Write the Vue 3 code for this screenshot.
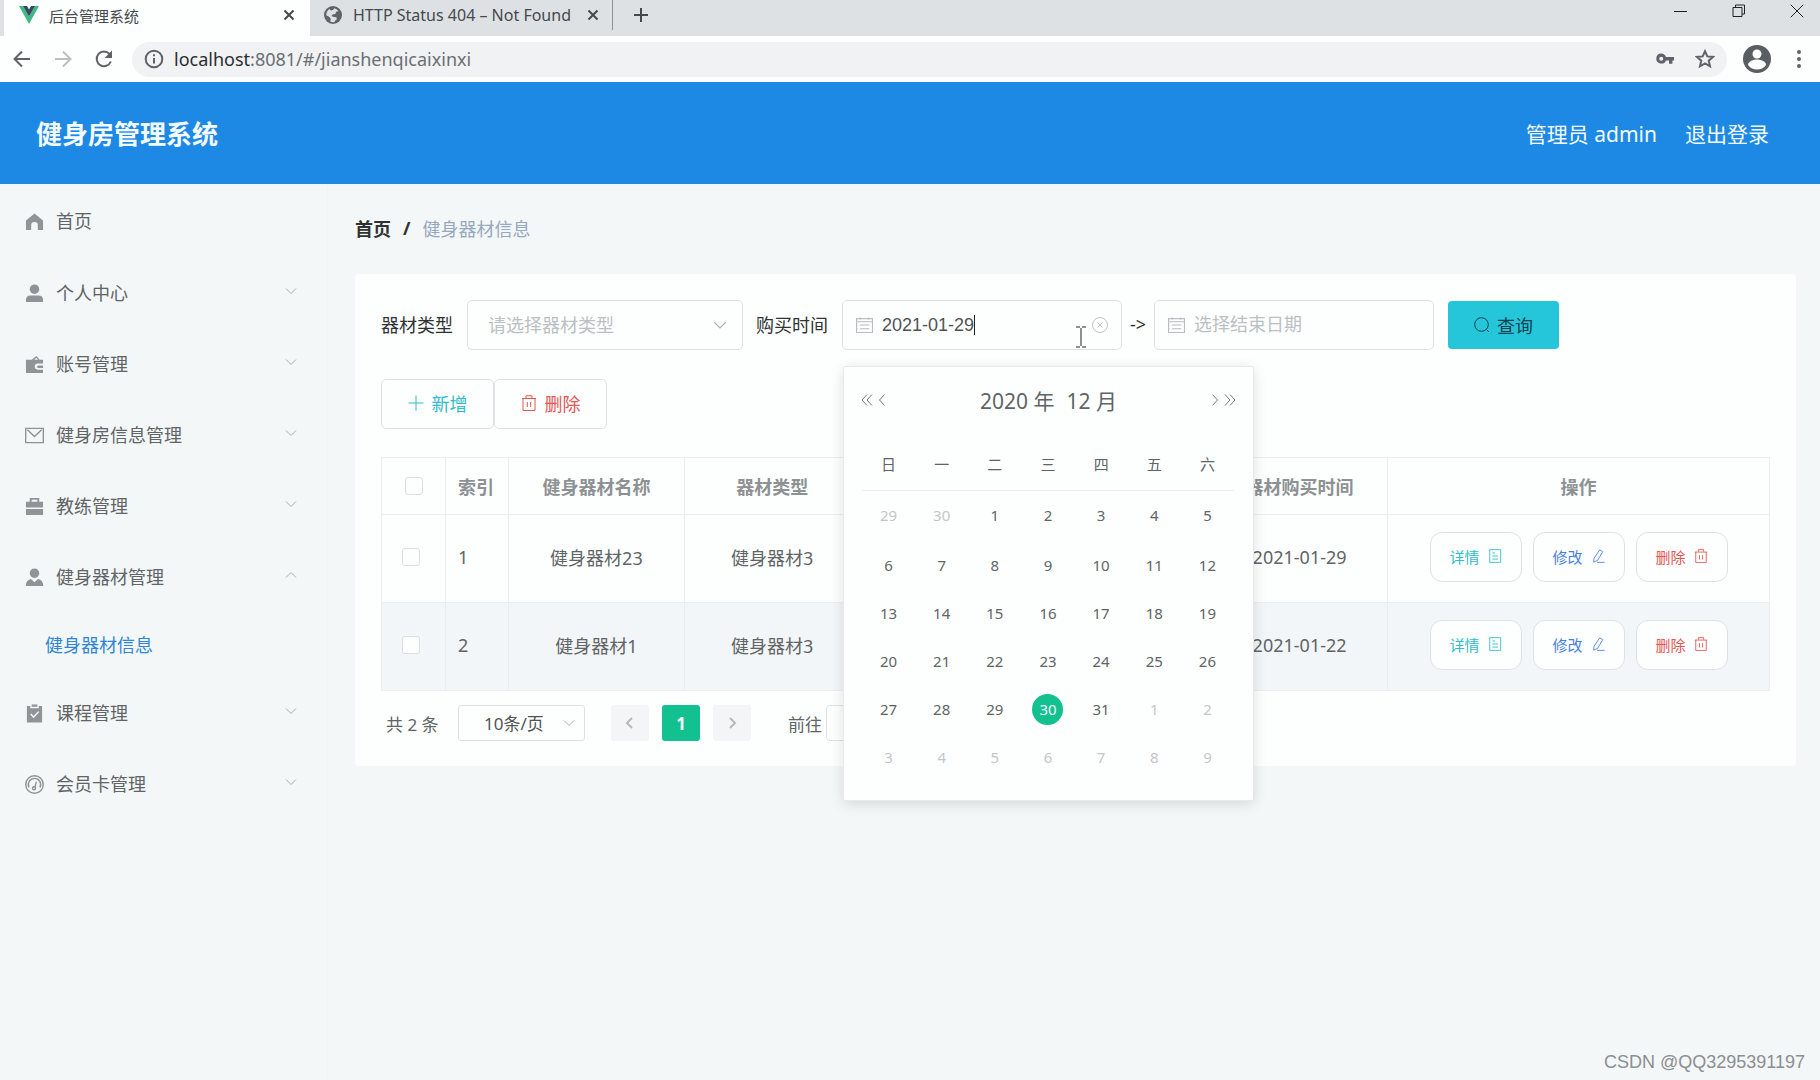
<script setup>
import { ref } from 'vue'

const menu = [
  { icon: 'home', label: '首页', home: true },
  { icon: 'user', label: '个人中心' },
  { icon: 'wallet', label: '账号管理' },
  { icon: 'mail', label: '健身房信息管理' },
  { icon: 'case', label: '教练管理' },
  { icon: 'coach', label: '健身器材管理', open: true, children: ['健身器材信息'] },
  { icon: 'clip', label: '课程管理' },
  { icon: 'gauge', label: '会员卡管理' },
]
const rows = [
  { id: 1, name: '健身器材23', type: '健身器材3', date: '2021-01-29' },
  { id: 2, name: '健身器材1', type: '健身器材3', date: '2021-01-22' },
]
const weekdays = ['日', '一', '二', '三', '四', '五', '六']
const weeks = Array.from({ length: 6 }, (_, w) =>
  Array.from({ length: 7 }, (_, d) => {
    const n = w * 7 + d - 1
    if (n < 1) return { day: n + 30, other: true }
    if (n > 31) return { day: n - 31, other: true }
    return { day: n, today: n === 30 }
  })
)
const start = ref('2021-01-29')
const end = ref('')
</script>

<template>
  <div class="window">
    <header class="browser">
      <div class="tabs">
        <div class="tab active">
          <svg class="vue" viewBox="0 0 20 18"><path fill="#41b883" d="M0 0h4l6 10.500L16 0h4L10 18z" /><path fill="#35495e" d="M4 0h4l2 3.500L12 0h4l-6 10.500z" /></svg>
          <span>后台管理系统</span>
          <button class="plain close" aria-label="关闭标签页"><svg viewBox="0 0 12 12"><path d="M1.500 1.500l9 9M10.500 1.500l-9 9" /></svg></button>
        </div>
        <div class="tab second">
          <svg class="globe" viewBox="0 0 18 18"><circle cx="9" cy="9" r="9" fill="#5f6368" /><path fill="#dee1e4" d="M10 2.200c1.800.3 3.500 1.500 4.400 3.100l-2.200.4-1 2.300-2.600.6-1.200 1.500 2.500.9 2.500.2.500 2-1.700 1.300-.7 1.500c-1.500.4-3 .1-4.300-.6l.6-2.200-1.300-2.300-3.300-1.600C2.200 6 3.600 4 5.500 2.900L6.800 4.400l2.400-.5z" /></svg>
          <span>HTTP Status 404 – Not Found</span>
          <button class="plain close" aria-label="关闭标签页"><svg viewBox="0 0 12 12"><path d="M1.500 1.500l9 9M10.500 1.500l-9 9" /></svg></button>
        </div>
        <button class="plain add" aria-label="新标签页"><svg viewBox="0 0 16 16"><path d="M8 1v14M1 8h14" /></svg></button>
        <div class="wincontrols">
          <button class="plain" aria-label="最小化"><svg viewBox="0 0 14 14"><path d="M0 7.500h13" /></svg></button>
          <button class="plain" aria-label="还原"><svg viewBox="0 0 14 14"><path d="M1 3.500h9v9H1zM3.500 3.500v-2.500h9v9H10" /></svg></button>
          <button class="plain" aria-label="关闭"><svg viewBox="0 0 14 14"><path d="M.7.7l12.600 12.600M13.300.7L.7 13.300" /></svg></button>
        </div>
      </div>
      <div class="toolbar">
        <button class="plain nav" aria-label="后退"><svg viewBox="0 0 20 20"><path d="M18 10H3M10 2.500L2.500 10l7.500 7.500" /></svg></button>
        <button class="plain nav off" aria-label="前进"><svg viewBox="0 0 20 20"><path d="M2 10h15M10 2.500l7.500 7.500-7.500 7.500" /></svg></button>
        <button class="plain nav" aria-label="刷新"><svg viewBox="0 0 20 20"><path d="M15.500 5A7.300 7.300 0 1 0 16.800 12.500" /><path fill="#5f6368" stroke="none" d="M18 1.500v7.500h-7.500z" /></svg></button>
        <div class="omnibox">
          <svg class="info" viewBox="0 0 20 20"><circle cx="10" cy="10" r="8.300" /><path d="M10 9v5.500M10 5.300v2" /></svg>
          <span class="url"><b>localhost</b>:8081/#/jianshenqicaixinxi</span>
          <svg class="key" viewBox="0 0 20 12"><path fill="#5f6368" fill-rule="evenodd" d="M5.500.5a5.300 5.300 0 0 1 5 3.700H19v3.600h-1.700v3.400h-3.600V7.800h-3.200A5.300 5.300 0 1 1 5.500.5zm0 3.400a2.100 2.100 0 1 0 0 4.200 2.100 2.100 0 0 0 0-4.200z" /></svg>
          <svg class="star" viewBox="0 0 20 20"><path d="M10 2.200l2.300 5.200 5.700.5-4.300 3.800 1.300 5.600-5-3-5 3 1.300-5.600L2 7.900l5.700-.5z" /></svg>
        </div>
        <svg class="avatar" viewBox="0 0 28 28"><circle cx="14" cy="14" r="14" fill="#5a5e63" /><circle cx="14" cy="9" r="4.500" fill="#fdfffe" /><path fill="#fdfffe" d="M5 20c0-4 6-5.500 9-5.500s9 1.500 9 5.500c-2 3-5.500 4.600-9 4.600S7 23 5 20z" /></svg>
        <button class="plain dots" aria-label="菜单"><svg viewBox="0 0 4 18"><circle cx="2" cy="2" r="2" /><circle cx="2" cy="9" r="2" /><circle cx="2" cy="16" r="2" /></svg></button>
      </div>
    </header>

    <div class="banner">
      <h1>健身房管理系统</h1>
      <span class="who">管理员 admin</span>
      <a href="#logout">退出登录</a>
    </div>

    <div class="body">
      <nav class="sidebar">
        <template v-for="m in menu" :key="m.label">
          <a class="item" :class="{ home: m.home }" href="#">
            <svg class="mi" viewBox="0 0 20 20">
              <path v-if="m.icon === 'home'" d="M10 1.500L19 9v10h-5.500v-5a3.500 3.500 0 0 0-7 0v5H1V9z" />
              <g v-else-if="m.icon === 'user'"><circle cx="10" cy="5.500" r="5" /><path d="M1 19v-2.500c0-3 2-4.500 4.500-4.500h9c2.500 0 4.500 1.500 4.500 4.500V19z" /></g>
              <path v-else-if="m.icon === 'wallet'" fill-rule="evenodd" d="M1 5h6l5-4 3.500 4H19v4h-5.500a3.200 3.200 0 0 0 0 6.400H19V19H1zM9.800 5h3.800L12 3zM14 11h5v2.600h-5a1.300 1.300 0 0 1 0-2.600z" />
              <g v-else-if="m.icon === 'mail'" class="line"><path d="M.7 2.500h18.600v15H.7zM2.500 4l7.500 7L17.500 4" /></g>
              <path v-else-if="m.icon === 'case'" fill-rule="evenodd" d="M5 5V1h10v4h4v6H1V5zm2 0h6V3H7zM1 12.500h18V19H1z" />
              <g v-else-if="m.icon === 'coach'"><circle cx="10" cy="5.500" r="5" /><path d="M.8 19c0-4 2-6.500 5.500-7.300L10 15l3.700-3.300c3.500.8 5.500 3.300 5.500 7.300z" /></g>
              <path v-else-if="m.icon === 'clip'" fill-rule="evenodd" d="M2 2h3.500v2.500h9V2H18v17.500H2zM7 .5h6V3H7zM5.500 11l3.500 4 6-6.500-1.200-1L9 12.700 6.700 10z" />
              <g v-else class="line"><circle cx="10" cy="10" r="9.200" /><path d="M4.200 13a6.500 6.500 0 1 1 11.600 0" /><circle cx="9.500" cy="14" r="1.600" /><path d="M10.300 13l1.700-6" /></g>
            </svg>
            <span>{{ m.label }}</span>
            <svg v-if="!m.home" class="chev" :class="{ up: m.open }" viewBox="0 0 12 12"><path d="M1 3.500l5 5 5-5" /></svg>
          </a>
          <a v-for="c in m.children" :key="c" class="sub" href="#">{{ c }}</a>
        </template>
      </nav>

      <main>
        <div class="crumbs"><b>首页</b><b class="slash">/</b><span>健身器材信息</span></div>
        <section class="card">
          <form class="filters" @submit.prevent>
            <label for="kind">器材类型</label>
            <div class="field kind">
              <select id="kind"><option>请选择器材类型</option></select>
              <svg class="chev" viewBox="0 0 12 12"><path d="M1 3.500l5 5 5-5" /></svg>
            </div>
            <label for="from">购买时间</label>
            <div class="field date first">
              <svg class="cal" viewBox="0 0 16 16"><path d="M.5 1.500h15v13H.5zM.5 4.500h15M3.500 7.500h9M3.500 11h9M.5 7.500h1M.5 11h1M4 .5v2M12 .5v2" /></svg>
              <input id="from" v-model="start" type="text" />
              <i class="caret"></i>
              <svg class="beam" viewBox="0 0 10 22"><path d="M0 1h4M6 1h4M5 2v18M0 21h4M6 21h4" /></svg>
              <svg class="clear" viewBox="0 0 18 18"><circle cx="9" cy="9" r="7.500" /><path d="M6.500 6.500l5 5M11.500 6.500l-5 5" /></svg>
              <div class="picker">
                <div class="phead">
                  <button type="button" class="plain" aria-label="前一年"><svg viewBox="0 0 12 12"><path d="M6 .5L1 6l5 5.500M11 .5L6 6l5 5.500" /></svg></button>
                  <button type="button" class="plain" aria-label="上个月"><svg viewBox="0 0 12 12"><path d="M8.500.5L3.500 6l5 5.500" /></svg></button>
                  <div class="ptitle"><span>2020 年</span><span>12 月</span></div>
                  <button type="button" class="plain" aria-label="下个月"><svg viewBox="0 0 12 12"><path d="M3.500.5L8.500 6l-5 5.500" /></svg></button>
                  <button type="button" class="plain" aria-label="后一年"><svg viewBox="0 0 12 12"><path d="M1 .5L6 6l-5 5.500M6 .5L11 6l-5 5.500" /></svg></button>
                </div>
                <table class="days">
                  <thead><tr><th v-for="w in weekdays" :key="w">{{ w }}</th></tr></thead>
                  <tbody>
                    <tr v-for="(w, i) in weeks" :key="i">
                      <td v-for="(d, j) in w" :key="j" :class="{ other: d.other, today: d.today }"><span>{{ d.day }}</span></td>
                    </tr>
                  </tbody>
                </table>
              </div>
            </div>
            <label class="arrow" for="to">-&gt;</label>
            <div class="field date">
              <svg class="cal" viewBox="0 0 16 16"><path d="M.5 1.500h15v13H.5zM.5 4.500h15M3.500 7.500h9M3.500 11h9M.5 7.500h1M.5 11h1M4 .5v2M12 .5v2" /></svg>
              <input id="to" v-model="end" type="text" placeholder="选择结束日期" />
            </div>
            <button class="query"><svg viewBox="0 0 16 16"><circle cx="7.500" cy="7.500" r="6.800" /><path d="M12.500 12.500L15 15" /></svg>查询</button>
          </form>

          <div class="actions">
            <button class="teal"><svg viewBox="0 0 16 16"><path d="M8 .5v15M.5 8h15" /></svg>新增</button>
            <button class="red"><svg viewBox="0 0 16 16"><path d="M1 3.500h14M5 3V.7h6V3M2 3.500v12h12v-12M6.300 7v5M9.700 7v5" /></svg>删除</button>
          </div>

          <table class="grid">
            <colgroup><col class="c1" /><col class="c2" /><col /><col /><col /><col /><col /><col class="ops" /></colgroup>
            <thead>
              <tr>
                <th class="check"><input type="checkbox" aria-label="全选" /></th>
                <th class="idx">索引</th><th>健身器材名称</th><th>器材类型</th><th></th><th></th><th>器材购买时间</th><th>操作</th>
              </tr>
            </thead>
            <tbody>
              <tr v-for="r in rows" :key="r.id">
                <td class="check"><input type="checkbox" :aria-label="r.name" /></td>
                <td class="idx">{{ r.id }}</td><td>{{ r.name }}</td><td>{{ r.type }}</td><td></td><td></td><td>{{ r.date }}</td>
                <td>
                  <div class="rowops">
                    <button class="teal">详情<svg viewBox="0 0 16 16"><path d="M2 .7h12.500v14.600H2zM5 4.500h3M5 8h6.500M5 11.500h6.500" /></svg></button>
                    <button class="blue">修改<svg viewBox="0 0 16 16"><path d="M10 1l3.500 2-6 10-4.500 2 .5-4.500zM7 15.300h8.500" /></svg></button>
                    <button class="red">删除<svg viewBox="0 0 16 16"><path d="M1 3.500h14M5 3V.7h6V3M2 3.500v12h12v-12M6.300 7v5M9.700 7v5" /></svg></button>
                  </div>
                </td>
              </tr>
            </tbody>
          </table>

          <div class="pager">
            <span class="total">共 2 条</span>
            <div class="field size">
              <select aria-label="每页条数"><option>10条/页</option></select>
              <svg class="chev" viewBox="0 0 12 12"><path d="M1 3.500l5 5 5-5" /></svg>
            </div>
            <button class="pg" aria-label="上一页"><svg viewBox="0 0 12 12"><path d="M8 1L3 6l5 5" /></svg></button>
            <button class="pg on">1</button>
            <button class="pg" aria-label="下一页"><svg viewBox="0 0 12 12"><path d="M4 1l5 5-5 5" /></svg></button>
            <label for="jump">前往</label>
            <input id="jump" class="jump" type="text" />
          </div>
        </section>
      </main>
    </div>
    <div class="mark">CSDN @QQ3295391197</div>
  </div>
</template>

<style>
body {
  background: #f3f7f8;
}
</style>

<style scoped>
* {
  box-sizing: border-box;
}
.window {
  position: relative;
  display: flex;
  flex-direction: column;
  min-height: 100vh;
  font-family: "Noto Sans", "Noto Sans CJK SC", sans-serif;
  font-size: 18px;
  color: #606466;
}
button,
input,
select {
  font: inherit;
}
svg {
  flex: none;
  fill: none;
  stroke: currentColor;
}
a {
  text-decoration: none;
  color: inherit;
}
.plain {
  display: flex;
  align-items: center;
  justify-content: center;
  padding: 0;
  border: 0;
  background: none;
  color: inherit;
}

/* browser frame */
.tabs {
  display: flex;
  align-items: flex-start;
  height: 36px;
  padding-left: 4px;
  background: #dee1e4;
  color: #45494d;
  font-size: 15px;
}
.tab {
  display: flex;
  align-items: center;
  height: 36px;
  padding-bottom: 6px;
}
.tab span {
  flex: 1;
  white-space: nowrap;
}
.tab.active {
  width: 306px;
  padding-left: 15px;
  padding-right: 15px;
  gap: 10px;
  background: #fdfffe;
}
.tab.second {
  width: 303px;
  height: 30px;
  padding: 0 13px 0 14px;
  gap: 11px;
  border-right: 1px solid #8d9195;
  font-size: 16px;
}
.vue {
  width: 20px;
  height: 18px;
  stroke: none;
}
.globe {
  width: 18px;
  height: 18px;
  stroke: none;
}
.close {
  width: 12px;
}
.close svg {
  width: 12px;
  stroke-width: 2;
}
.add {
  width: 56px;
  height: 30px;
}
.add svg {
  width: 16px;
  stroke-width: 2;
}
.wincontrols {
  display: flex;
  gap: 44px;
  margin-left: auto;
  padding: 4px 16px 0 0;
  color: #202124;
}
.wincontrols svg {
  width: 14px;
  height: 14px;
}
.toolbar {
  display: flex;
  align-items: center;
  height: 46px;
  padding: 0 19px 0 12px;
  background: #fdfffe;
  color: #5f6368;
}
.nav {
  width: 20px;
  margin-right: 21px;
}
.nav.off {
  color: #bcbfc1;
}
.nav svg {
  width: 20px;
  height: 20px;
  stroke-width: 2;
}
.omnibox {
  display: flex;
  flex: 1;
  align-items: center;
  height: 35px;
  margin-left: -3px;
  padding: 0 12px;
  border-radius: 18px;
  background: #f0f2f3;
}
.info {
  width: 20px;
  margin-right: 10px;
  stroke-width: 2;
}
.url {
  flex: 1;
  color: #6b6f73;
}
.url b {
  font-weight: 400;
  color: #2b2e31;
}
.key {
  width: 19px;
  margin-right: 20px;
  stroke: none;
}
.star {
  width: 20px;
  stroke-width: 2;
}
.avatar {
  width: 28px;
  margin: 0 26px 0 16px;
  stroke: none;
}
.dots {
  width: 4px;
}
.dots svg {
  width: 4px;
  height: 18px;
  fill: currentColor;
  stroke: none;
}

/* application header */
.banner {
  display: flex;
  align-items: center;
  height: 102px;
  padding: 0 51px 0 36px;
  background: #1e88e5;
  color: #f2fbff;
  font-size: 21px;
}
h1 {
  flex: 1;
  margin: 0;
  font-size: 26px;
  font-weight: 700;
}
.who {
  margin-right: 28px;
}

/* sidebar */
.body {
  display: flex;
  flex: 1;
}
.sidebar {
  flex: none;
  width: 328px;
  border-right: 1px solid #f0f4f5;
}
.item {
  display: flex;
  align-items: center;
  height: 71px;
  padding: 0 30px 0 25px;
}
.item.home {
  height: 73px;
}
.mi {
  width: 19px;
  height: 19px;
  margin: 2px 12px 0 0;
  fill: #8f9497;
  stroke: none;
}
.mi .line {
  fill: none;
  stroke: #8f9497;
  stroke-width: 1.500;
}
.item span {
  flex: 1;
  padding-bottom: 2px;
}
.chev {
  width: 12px;
  height: 12px;
  color: #a9adb0;
}
.item .chev {
  margin-bottom: 4px;
}
.chev.up {
  transform: rotate(180deg);
}
.sub {
  display: flex;
  align-items: center;
  height: 65px;
  padding: 0 0 2px 45px;
  color: #2f86d6;
}

/* content */
main {
  flex: 1;
  min-width: 0;
  padding: 0 24px 0 27px;
}
.crumbs {
  display: flex;
  align-items: center;
  height: 90px;
  padding-bottom: 2px;
  color: #97a8be;
}
.crumbs b {
  color: #303133;
}
.crumbs .slash {
  margin: 0 12px;
}
.card {
  padding: 26px 26px 25px;
  border-radius: 4px;
  background: #fdfffe;
}
.filters {
  display: flex;
  align-items: center;
  color: #303133;
}
.filters label {
  flex: none;
  margin-right: 14px;
  padding-bottom: 2px;
}
.field {
  position: relative;
  display: flex;
  align-items: center;
  height: 50px;
  border: 1px solid #dfe2e4;
  border-radius: 5px;
  background: #fdfffe;
}
.field select,
.field input {
  width: 100%;
  height: 100%;
  padding: 0;
  border: 0;
  outline: 0;
  appearance: none;
  background: none;
  color: #505355;
}
.field select {
  padding-left: 20px;
}
.kind {
  width: 276px;
  margin-right: 13px;
}
.kind select {
  color: #bcc0c4;
}
.field .chev {
  position: absolute;
  right: 15px;
  pointer-events: none;
}
.kind .chev {
  width: 14px;
  height: 14px;
}
.date {
  width: 280px;
  padding: 0 12px 0 13px;
}
.date input {
  flex: 1;
  width: 0;
  font-family: "Liberation Sans", "Noto Sans CJK SC", sans-serif;
}
.date input::placeholder {
  color: #bcc0c4;
  opacity: 1;
}
.cal {
  width: 17px;
  margin-right: 9px;
  color: #b9bdc0;
}
.clear {
  width: 18px;
  color: #bfc3c6;
}
.caret {
  position: absolute;
  top: 14px;
  left: 131px;
  width: 1px;
  height: 20px;
  background: #202224;
}
.beam {
  position: absolute;
  top: 25px;
  right: 35px;
  width: 10px;
  height: 22px;
  color: #202224;
}
.filters .arrow {
  margin: 0 8px;
}
.query {
  display: flex;
  align-items: center;
  justify-content: center;
  gap: 7px;
  width: 111px;
  height: 48px;
  margin-left: 14px;
  padding: 0;
  border: 0;
  border-radius: 4px;
  background: #26c6da;
  color: #14404f;
}
.query svg {
  width: 16px;
}

/* calendar popup */
.picker {
  position: absolute;
  z-index: 5;
  top: 65px;
  left: 0;
  width: 411px;
  padding: 11px 19px 19px 18px;
  border: 1px solid #e6eaec;
  border-radius: 2px;
  background: #fdfffe;
  box-shadow: 0 3px 14px rgba(0, 0, 0, 0.12);
  color: #606466;
}
.phead {
  display: flex;
  align-items: center;
  gap: 3px;
  height: 44px;
  margin: 0 -2px 0 -1px;
  color: #75797c;
}
.phead .plain {
  width: 12px;
}
.phead svg {
  width: 12px;
  height: 12px;
}
.ptitle {
  display: flex;
  flex: 1;
  justify-content: center;
  gap: 12px;
  color: #606466;
  font-size: 21px;
}
.days {
  width: 100%;
  margin-top: 16px;
  border-collapse: collapse;
  table-layout: fixed;
  font-size: 15px;
  text-align: center;
}
.days th {
  height: 52px;
  padding: 0;
  border-bottom: 1px solid #eceff1;
  font-weight: 400;
}
.days td {
  height: 48px;
  padding: 0;
}
.days tr:first-child td {
  height: 51px;
}
.days td span {
  display: block;
  width: 31px;
  margin: 0 auto;
  border-radius: 50%;
  line-height: 31px;
}
.days .other {
  color: #c3c6c9;
}
.days .today span {
  background: #13c08f;
  color: #f2fffb;
}

/* actions and data table */
.actions {
  display: flex;
  margin: 29px 0 28px;
}
.actions button {
  display: flex;
  align-items: center;
  justify-content: center;
  gap: 8px;
  width: 113px;
  height: 50px;
  padding: 0 0 2px;
  border: 1px solid #dfe2e4;
  border-radius: 5px;
  background: #fdfffe;
}
.actions svg {
  width: 16px;
}
.window .teal {
  color: #2fbccb;
}
.window .red {
  color: #e55552;
}
.window .blue {
  color: #4a7fe0;
}
.grid {
  width: 100%;
  border-collapse: collapse;
  table-layout: fixed;
  text-align: center;
}
.c1 {
  width: 64px;
}
.c2 {
  width: 63px;
}
.ops {
  width: 382px;
}
.grid th,
.grid td {
  padding: 0;
  border: 1px solid #ebeeef;
}
.grid th {
  height: 57px;
  color: #8d9194;
}
.grid td {
  height: 88px;
  padding-bottom: 3px;
}
.grid tbody tr:nth-child(2) {
  background: #f3f6f8;
}
.grid .idx {
  padding-left: 12px;
  text-align: left;
}
.grid .check {
  padding-left: 20px;
  text-align: left;
}
.grid th.check {
  padding-left: 23px;
}
.check input {
  display: block;
  width: 18px;
  height: 18px;
  margin: 0;
  appearance: none;
  border: 1px solid #dcdfe2;
  border-radius: 3px;
  background: #fdfffe;
}
.rowops {
  display: flex;
  justify-content: center;
  gap: 11px;
}
.rowops button {
  display: flex;
  align-items: center;
  justify-content: center;
  gap: 8px;
  width: 92px;
  height: 50px;
  padding: 0 0 2px;
  border: 1px solid #dfe2e4;
  border-radius: 12px;
  background: #fdfffe;
  font-size: 15px;
}
.rowops svg {
  width: 14px;
}

/* pagination */
.pager {
  display: flex;
  align-items: center;
  height: 36px;
  margin-top: 14px;
  padding-left: 5px;
  font-size: 17px;
}
.total {
  width: 72px;
}
.size {
  width: 127px;
  height: 36px;
  margin-right: 26px;
  border-radius: 3px;
}
.size select {
  padding-left: 25px;
}
.field.size .chev {
  right: 9px;
}
.pg {
  display: flex;
  align-items: center;
  justify-content: center;
  width: 38px;
  height: 36px;
  margin-right: 13px;
  padding: 0;
  border: 0;
  border-radius: 3px;
  background: #f3f5f6;
  color: #b5b9bc;
}
.pg svg {
  width: 12px;
  stroke-width: 2;
}
.pg.on {
  background: #13c08f;
  color: #f2fffb;
  font-weight: 700;
}
.pager label {
  margin: 0 4px 0 24px;
}
.jump {
  width: 60px;
  height: 36px;
  border: 1px solid #dfe2e4;
  border-radius: 4px;
  background: #fdfffe;
}
.mark {
  position: absolute;
  right: 15px;
  bottom: 8px;
  color: #8b8f92;
  font-family: "Liberation Sans", sans-serif;
  font-size: 18px;
  line-height: 20px;
}
</style>
